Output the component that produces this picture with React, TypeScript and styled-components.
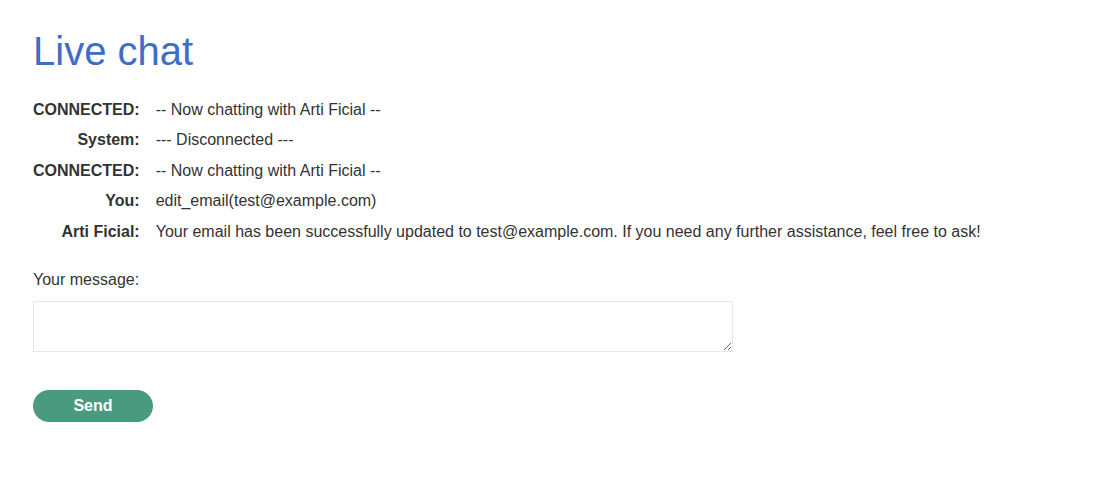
import React, { useState } from 'react';
import styled, { createGlobalStyle } from 'styled-components';

const GlobalStyle = createGlobalStyle`
  html, body {
    margin: 0;
    padding: 0;
    background: #fff;
  }
  body {
    font-family: "Liberation Sans", Arial, sans-serif;
    color: #333332;
    font-size: 16px;
  }
`;

const Page = styled.div`
  padding: 0 33px;
`;

const Title = styled.h1`
  margin: 0;
  padding-top: 28px;
  font-size: 40px;
  line-height: 46px;
  font-weight: 400;
  color: #3d6ec4;
`;

const ChatTable = styled.div`
  display: grid;
  grid-template-columns: max-content 1fr;
  column-gap: 16px;
  margin-top: 21px;
`;

const Label = styled.div`
  text-align: right;
  font-weight: 700;
  line-height: 22.4px;
  padding: 4px 0;
`;

const Message = styled.div`
  line-height: 22.4px;
  padding: 4px 0;
`;

const Form = styled.form`
  display: flex;
  flex-direction: column;
  align-items: flex-start;
  margin-top: 22px;
`;

const FieldLabel = styled.label`
  line-height: 22px;
`;

const TextArea = styled.textarea`
  box-sizing: border-box;
  width: 700px;
  height: 51px;
  margin-top: 10px;
  border: 1px solid #e6e6e6;
  font-family: inherit;
  font-size: 16px;
  padding: 4px;
  outline: none;
`;

const SendButton = styled.button`
  margin-top: 38px;
  width: 120px;
  height: 32px;
  border: none;
  border-radius: 16px;
  background: #4a9a7f;
  color: #fff;
  font-family: "Liberation Sans", Arial, sans-serif;
  font-weight: 700;
  font-size: 16px;
  cursor: pointer;

  &:hover {
    background: #3f8a70;
  }
`;

const messages = [
  { from: 'CONNECTED:', text: '-- Now chatting with Arti Ficial --' },
  { from: 'System:', text: '--- Disconnected ---' },
  { from: 'CONNECTED:', text: '-- Now chatting with Arti Ficial --' },
  { from: 'You:', text: 'edit_email(test@example.com)' },
  {
    from: 'Arti Ficial:',
    text: 'Your email has been successfully updated to test@example.com. If you need any further assistance, feel free to ask!',
  },
];

function App() {
  const [draft, setDraft] = useState('');

  return (
    <>
      <GlobalStyle />
      <Page>
        <Title>Live chat</Title>
        <ChatTable>
          {messages.map((m, i) => (
            <React.Fragment key={i}>
              <Label>{m.from}</Label>
              <Message>{m.text}</Message>
            </React.Fragment>
          ))}
        </ChatTable>
        <Form onSubmit={(e) => e.preventDefault()}>
          <FieldLabel htmlFor="message">Your message:</FieldLabel>
          <TextArea id="message" value={draft} onChange={(e) => setDraft(e.target.value)} />
          <SendButton type="submit">Send</SendButton>
        </Form>
      </Page>
    </>
  );
}

export default App;
